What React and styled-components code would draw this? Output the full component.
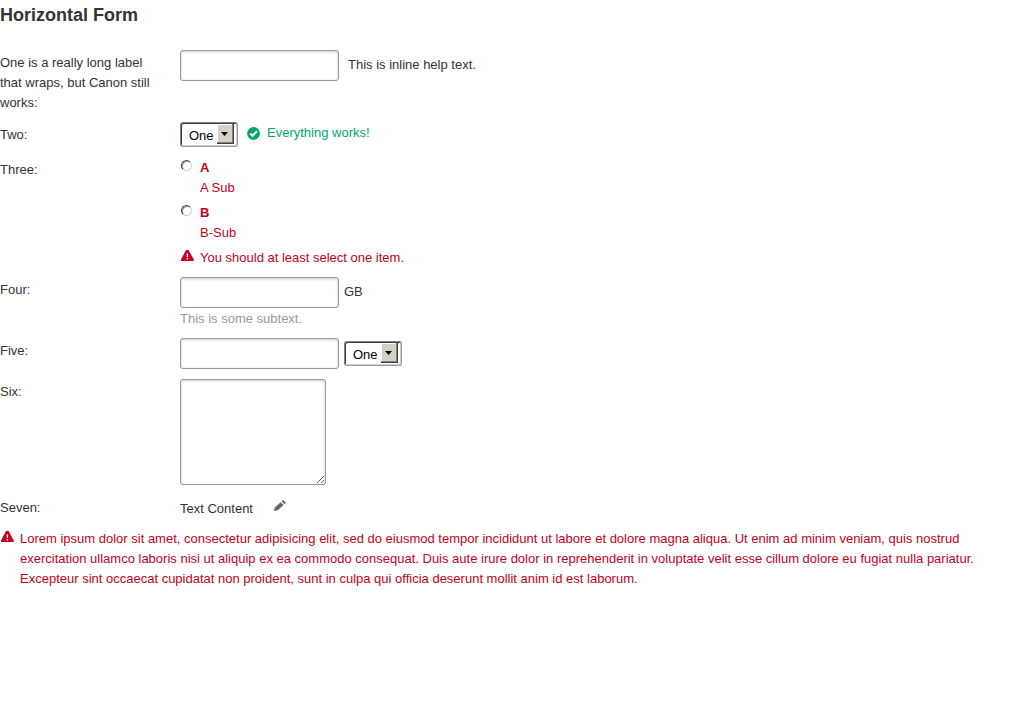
import React from 'react';
import styled, { createGlobalStyle, css } from 'styled-components';

const GlobalStyle = createGlobalStyle`
  *, *::before, *::after { box-sizing: border-box; }
  body {
    margin: 0;
    background: #fff;
    color: #333;
    font: 13px/20px "Liberation Sans", Arial, sans-serif;
  }
  svg { display: block; }
`;

const Page = styled.main`
  min-width: 0;
`;

const Title = styled.h1`
  margin: 0 0 20px;
  font-size: 18px;
  line-height: 30px;
  font-weight: bold;
`;

const Form = styled.form`
  display: flex;
  flex-direction: column;
  gap: 10px;
`;

const Row = styled.div`
  display: grid;
  grid-template-columns: 160px minmax(0, 1fr);
  column-gap: 20px;
  align-items: start;
`;

const labelStyle = css`
  padding-top: 3px;
  margin-bottom: -1px;
`;

const Label = styled.label`
  ${labelStyle}
`;

const LabelText = styled.span`
  ${labelStyle}
`;

const Line = styled.div`
  display: flex;
  align-items: center;
  gap: ${(p) => p.$gap || 5}px;
`;

const fieldStyle = css`
  display: block;
  margin: 0;
  padding: 4px;
  border: 1px solid #999;
  border-radius: 3px;
  background: #fff;
  box-shadow: inset 0 1px 3px rgba(0, 0, 0, 0.2);
  color: #333;
  font: inherit;
`;

const TextInput = styled.input`
  ${fieldStyle}
  width: 159px;
  height: 31px;
`;

const TextArea = styled.textarea`
  ${fieldStyle}
  width: 146px;
  height: 106px;
  resize: both;
`;

const SelectFrame = styled.span`
  position: relative;
  width: 58px;
  height: 25px;
`;

const NativeSelect = styled.select`
  appearance: none;
  display: block;
  width: 100%;
  height: 100%;
  margin: 0;
  padding: 3px 20px 1px 8px;
  border: 1px solid;
  border-color: #808080 #999 #999 #808080;
  border-radius: 3px;
  background: #fff;
  box-shadow: inset 1px 1px 0 #404040, inset -1px -1px 0 #d4d0c8;
  color: #000;
  font: inherit;
`;

const SelectArrow = styled.svg`
  position: absolute;
  top: 2px;
  right: 4px;
  pointer-events: none;
`;

const Help = styled.span`
  padding-bottom: 2px;
`;

const Success = styled.span`
  display: grid;
  grid-template-columns: 15px auto;
  align-items: center;
  column-gap: 5px;
  padding-bottom: 3px;
  color: #00a86b;
`;

const Subtext = styled.div`
  padding-top: 1px;
  margin-bottom: -1px;
  color: #999;
`;

const Choices = styled.div`
  display: flex;
  flex-direction: column;
  gap: 5px;
  padding-top: 1px;
  margin-bottom: -1px;
  color: #c40022;
`;

const Choice = styled.label`
  display: grid;
  grid-template-columns: 15px minmax(0, 1fr);
  column-gap: 5px;
`;

const Radio = styled.input`
  appearance: none;
  width: 11px;
  height: 11px;
  margin: 2px 1px;
  border: 1px solid;
  border-color: #444 #d4d0c8 #d4d0c8 #444;
  border-radius: 50%;
  background: #fff;
  box-shadow: inset 1px 1px 0 #999;
  &:checked { background: radial-gradient(circle, #000 2px, #fff 3px); }
`;

const Message = styled.div`
  display: grid;
  grid-template-columns: 15px minmax(0, 1fr);
  column-gap: 5px;
  color: #c40022;
  > svg { margin: 1px 0 0 1px; }
`;

const StaticValue = styled.div`
  display: flex;
  align-items: flex-start;
  gap: 20px;
  padding-top: 4px;
`;

const EditButton = styled.button`
  width: 14px;
  height: 14px;
  margin: 0;
  padding: 0;
  border: 0;
  background: none;
  color: #666;
  cursor: pointer;
`;

const WarningIcon = () => (
  <svg width="13" height="13" viewBox="0 0 13 13" aria-hidden="true">
    <path d="M5 1h2.600L12.700 10.500V12H0v-1.500z" fill="#c40022" />
    <path d="M5.700 4.500h1.400v3.500H5.700zM5.700 9h1.400v1.500H5.700z" fill="#fff" />
  </svg>
);

const CheckIcon = () => (
  <svg width="13" height="13" viewBox="0 0 13 13" aria-hidden="true">
    <circle cx="6.5" cy="6.5" r="6.4" fill="#00a86b" />
    <path d="M3.200 6.500l2.300 2.300L10 4.200" fill="none" stroke="#fff" strokeWidth="2" />
  </svg>
);

const PencilIcon = () => (
  <svg width="14" height="14" viewBox="0 0 14 14" aria-hidden="true">
    <path d="M1 12l.8-3.600 5.900-5.200 2.900 2.900-5.900 5.200z" fill="currentColor" />
    <path d="M8.500 2.300L10 .900l2.900 2.900-1.500 1.400z" fill="currentColor" />
  </svg>
);

function Select({ id, label }) {
  return (
    <SelectFrame>
      <NativeSelect id={id} aria-label={label}>
        <option>One</option>
      </NativeSelect>
      <SelectArrow width="17" height="20" viewBox="0 0 17 20" aria-hidden="true">
        <path d="M0 0h17v20H0z" fill="#404040" />
        <path d="M0 0h16v19H0z" fill="#808080" />
        <path d="M0 0h15v18H0z" fill="#fff" />
        <path d="M1 1h14v17H1z" fill="#d4d0c8" />
        <path d="M4 8h7L7.500 12z" fill="#000" />
      </SelectArrow>
    </SelectFrame>
  );
}

export default function App() {
  return (
    <Page>
      <GlobalStyle />
      <Title>Horizontal Form</Title>
      <Form>
        <Row>
          <Label htmlFor="one">One is a really long label that wraps, but Canon still works:</Label>
          <Line $gap={9}>
            <TextInput id="one" type="text" />
            <Help>This is inline help text.</Help>
          </Line>
        </Row>
        <Row>
          <Label htmlFor="two">Two:</Label>
          <Line $gap={9}>
            <Select id="two" />
            <Success>
              <CheckIcon />
              <span>Everything works!</span>
            </Success>
          </Line>
        </Row>
        <Row role="radiogroup" aria-labelledby="three">
          <LabelText id="three">Three:</LabelText>
          <Choices>
            <Choice>
              <Radio type="radio" name="three" />
              <span><b>A</b><br />A Sub</span>
            </Choice>
            <Choice>
              <Radio type="radio" name="three" />
              <span><b>B</b><br />B-Sub</span>
            </Choice>
            <Message>
              <WarningIcon />
              <span>You should at least select one item.</span>
            </Message>
          </Choices>
        </Row>
        <Row>
          <Label htmlFor="four">Four:</Label>
          <div>
            <Line>
              <TextInput id="four" type="text" />
              <Help>GB</Help>
            </Line>
            <Subtext>This is some subtext.</Subtext>
          </div>
        </Row>
        <Row>
          <Label htmlFor="five">Five:</Label>
          <Line>
            <TextInput id="five" type="text" />
            <Select label="Five unit" />
          </Line>
        </Row>
        <Row>
          <Label htmlFor="six">Six:</Label>
          <TextArea id="six" />
        </Row>
        <Row>
          <LabelText>Seven:</LabelText>
          <StaticValue>
            <span>Text Content</span>
            <EditButton type="button" aria-label="Edit"><PencilIcon /></EditButton>
          </StaticValue>
        </Row>
        <Message>
          <WarningIcon />
          <span>
            Lorem ipsum dolor sit amet, consectetur adipisicing elit, sed do eiusmod tempor incididunt ut labore et dolore magna aliqua. Ut enim ad minim veniam, quis nostrud exercitation ullamco laboris nisi ut aliquip ex ea commodo consequat. Duis aute irure dolor in reprehenderit in voluptate velit esse cillum dolore eu fugiat nulla pariatur. Excepteur sint occaecat cupidatat non proident, sunt in culpa qui officia deserunt mollit anim id est laborum.
          </span>
        </Message>
      </Form>
    </Page>
  );
}
